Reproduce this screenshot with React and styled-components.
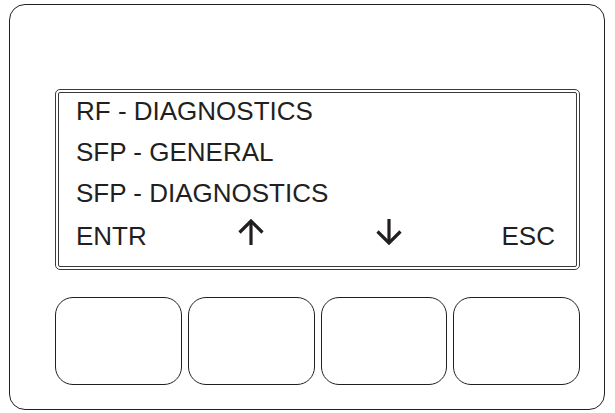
import React from "react";
import styled, { createGlobalStyle } from "styled-components";

const Global = createGlobalStyle`
  body {
    margin: 0;
    background: #fff;
    font-family: "Liberation Sans", Arial, sans-serif;
    color: #231f20;
  }
`;

const menuItems = ["RF - DIAGNOSTICS", "SFP - GENERAL", "SFP - DIAGNOSTICS"];

const Arrow = ({ down }) => (
  <svg width="26" height="26" viewBox="0 0 26 26">
    <g
      fill="none"
      stroke="#231f20"
      strokeWidth="3.2"
      transform={down ? "rotate(180 13 13)" : undefined}
    >
      <path d="M13 2 V26" />
      <path d="M1.5 13.5 L13 2 L24.5 13.5" />
    </g>
  </svg>
);

const App = () => (
  <>
    <Global />
    <Panel>
      <Screen>
        <ScreenInner>
          {menuItems.map((item) => (
            <Line key={item}>{item}</Line>
          ))}
          <KeyRow>
            <Label>ENTR</Label>
            <Arrow />
            <Arrow down />
            <Label>ESC</Label>
          </KeyRow>
        </ScreenInner>
      </Screen>
      <Buttons>
        {[0, 1, 2, 3].map((i) => (
          <Key key={i} />
        ))}
      </Buttons>
    </Panel>
  </>
);

const Panel = styled.div`
  box-sizing: border-box;
  margin: 4px 0 0 9px;
  width: 596px;
  height: 406px;
  border: 1.5px solid #231f20;
  border-radius: 16px;
  padding: 84px 0 0 45px;
`;

const Screen = styled.div`
  box-sizing: border-box;
  width: 525px;
  height: 181px;
  border: 1.5px solid #3a3a3a;
  border-radius: 5px;
  padding: 2px;
`;

const ScreenInner = styled.div`
  box-sizing: border-box;
  height: 100%;
  border: 1.5px solid #3a3a3a;
  border-radius: 2px;
  padding: 3px 21px 0 17px;
`;

const Line = styled.div`
  font-size: 26px;
  height: 41px;
  line-height: 30px;
`;

const KeyRow = styled.div`
  display: grid;
  grid-template-columns: 162px 138px 1fr auto;
  align-items: baseline;
`;

const Label = styled.span`
  font-size: 26px;
  line-height: 30px;
`;

const Buttons = styled.div`
  display: grid;
  grid-template-columns: repeat(4, 1fr);
  gap: 6px;
  width: 525px;
  margin-top: 27px;
`;

const Key = styled.div`
  box-sizing: border-box;
  height: 88px;
  border: 1.5px solid #231f20;
  border-radius: 18px;
`;

export default App;
